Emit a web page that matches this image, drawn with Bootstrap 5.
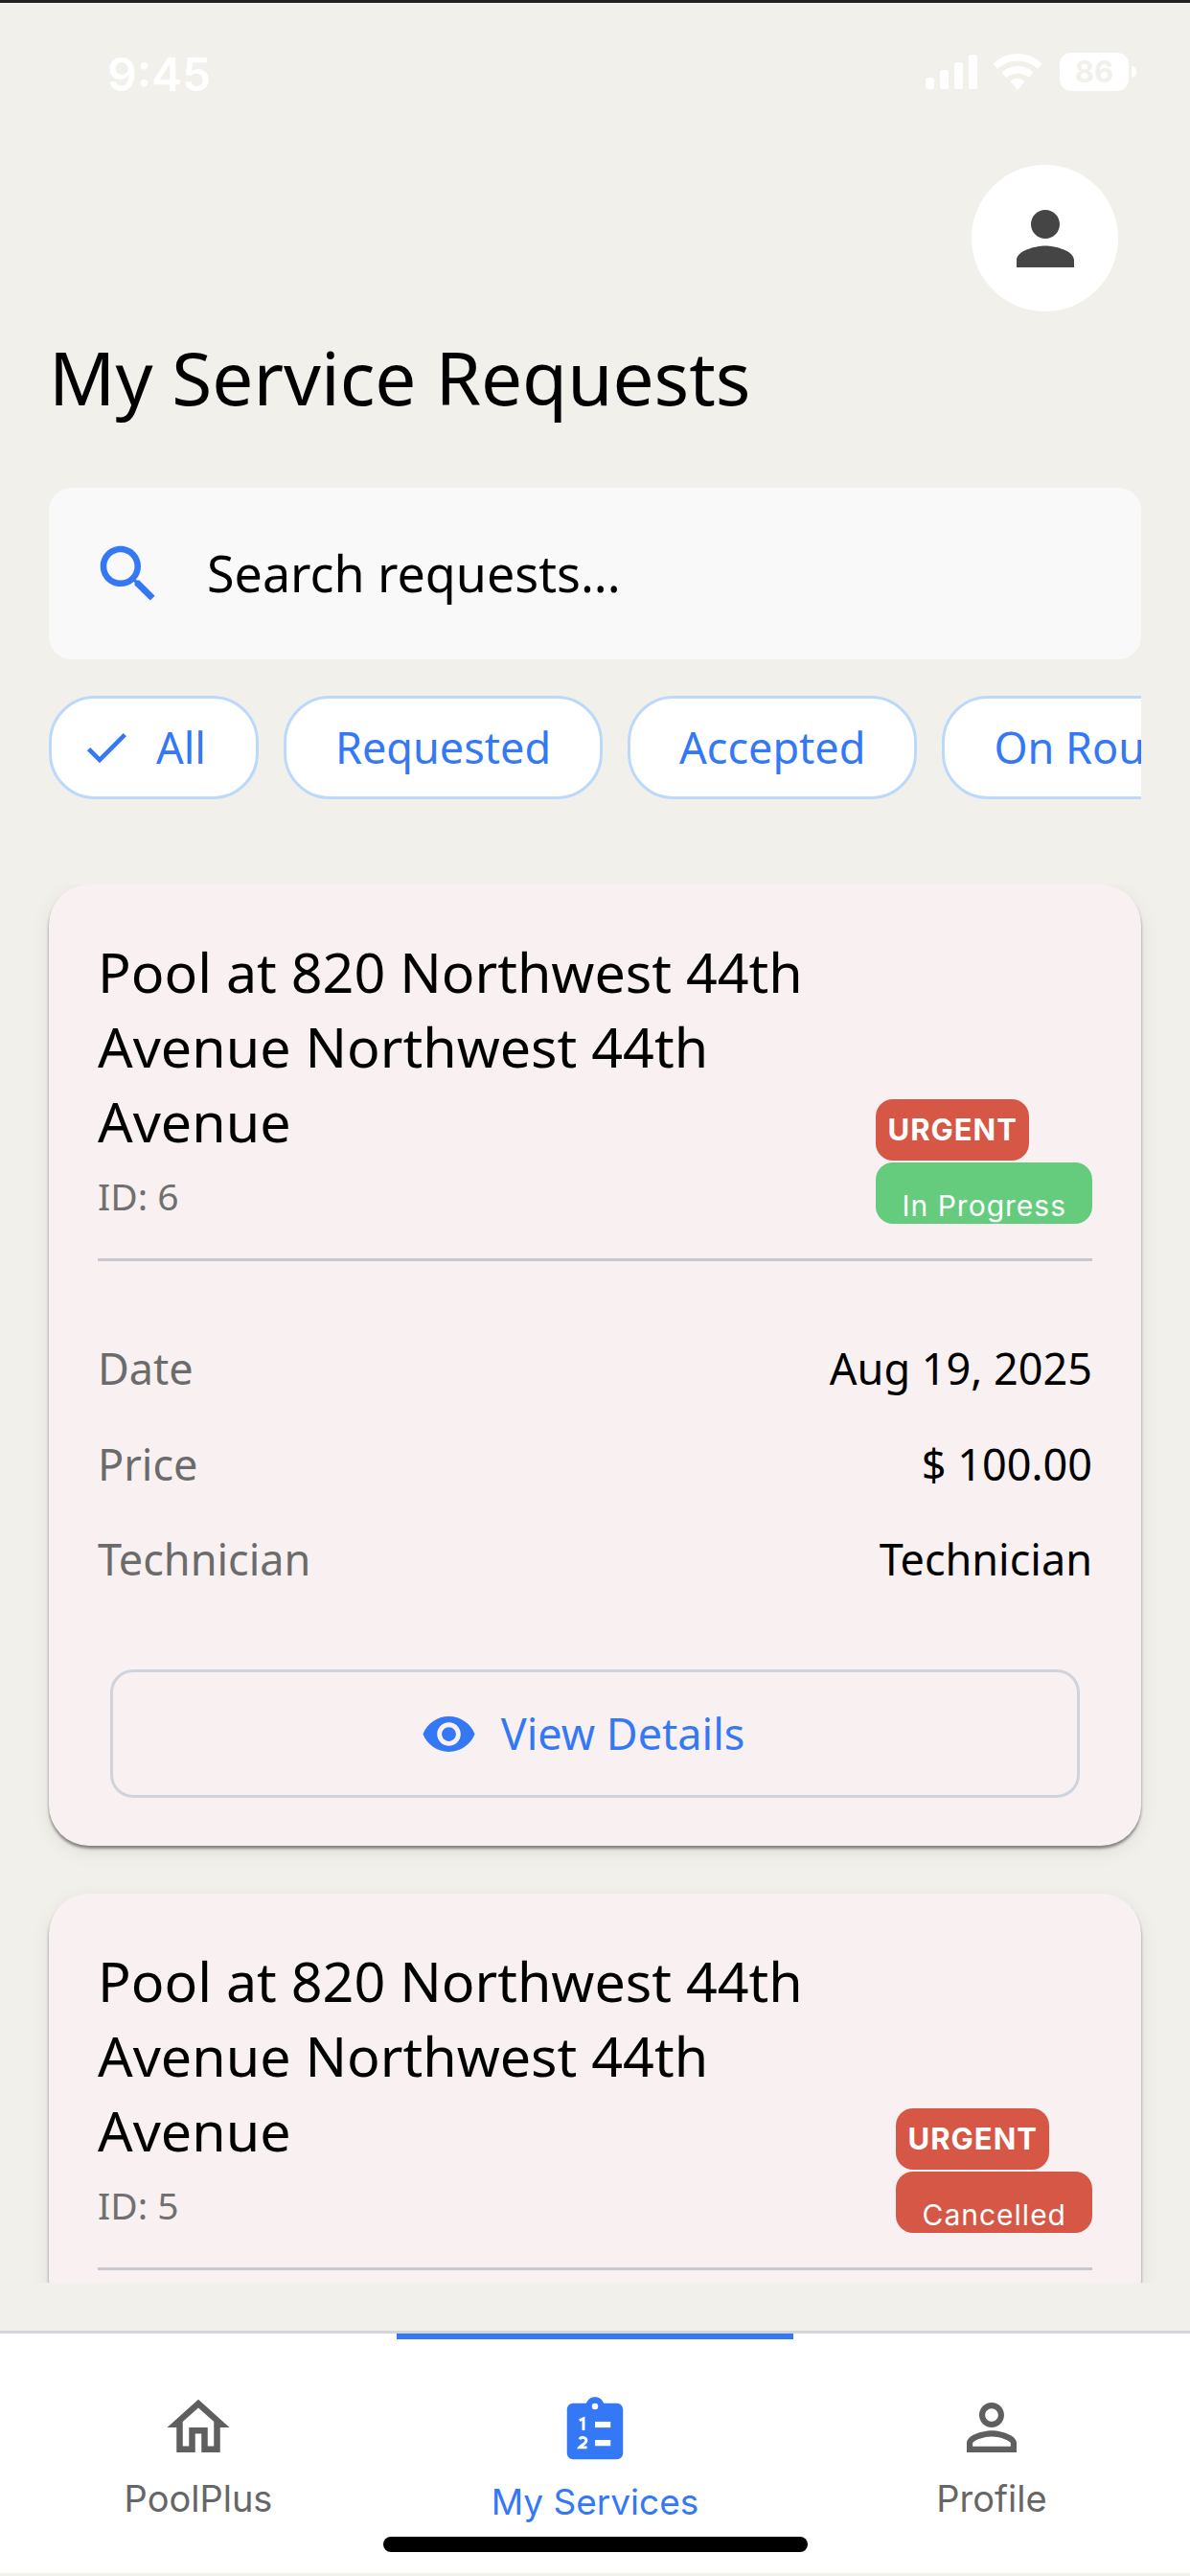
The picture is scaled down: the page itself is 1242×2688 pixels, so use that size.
<!DOCTYPE html>
<html lang="en">

<head>
    <meta charset="UTF-8">
    <meta name="viewport" content="width=device-width, initial-scale=1.0">
    <title>My Service Requests</title>
    <link href="https://cdn.jsdelivr.net/npm/bootstrap@5.3.0/dist/css/bootstrap.min.css" rel="stylesheet">
    <script defer src="https://cdn.jsdelivr.net/npm/bootstrap@5.3.0/dist/js/bootstrap.bundle.min.js"></script>
    <style>
        body {
            background-color: #f1f0eb;
            font-family: "Noto Sans", sans-serif;
            color: #000;
        }

        .screen {
            width: 1242px;
            height: 2688px;
            border-top: 3px solid #222;
            overflow: hidden;
        }

        /* Status bar */
        .status-bar {
            height: 169px;
            padding: 52px 56px 0 112px;
            color: #fff;
            font-family: Inter, sans-serif;
        }

        .status-time {
            font-size: 48px;
            font-weight: 600;
            line-height: 46px;
        }

        .status-batt {
            width: 72px;
            height: 40px;
            margin-left: 18px;
            background: #fff;
            border-radius: 12px;
            color: #f1f0eb;
            font-size: 31px;
            font-weight: 700;
            line-height: 40px;
            text-align: center;
        }

        .status-nub {
            width: 5px;
            height: 12px;
            margin-left: 3px;
            background: #fff;
            border-radius: 0 5px 5px 0;
        }

        /* Header */
        .avatar-row {
            padding-right: 75px;
        }

        .avatar-btn {
            width: 153px;
            height: 153px;
            background: #fff;
        }

        .page-title {
            font-size: 76.5px;
            line-height: 98px;
            font-weight: 400;
            margin: 19px 0 67px 51px;
        }

        /* Search and chips */
        .search-box {
            height: 179px;
            margin: 0 51px 38px;
            padding-left: 44px;
            background: #f9f9f9;
            border-radius: 24px;
        }

        .search-box .form-control {
            background: transparent;
            border: 0;
            box-shadow: none;
            font-size: 52px;
            padding: 0 0 2px 43px;
            color: #000;
        }

        .search-box .form-control::placeholder {
            color: #000;
            opacity: 1;
        }

        .chip-row {
            margin: 0 51px 89px;
            gap: 26px;
            overflow: hidden;
        }

        .chip-btn {
            flex: none;
            height: 108px;
            padding: 0 51px;
            background: #fff;
            border: 3px solid #bcd8fb;
            border-radius: 48px;
            color: #3478f6;
            font-size: 45px;
        }

        .chip-all {
            padding: 0 52px 0 29px;
            gap: 24px;
        }

        /* Request cards */
        .req-list {
            height: 1459px;
            padding: 0 51px;
            margin-bottom: 50px;
            overflow: hidden;
            gap: 50px;
        }

        .req-card {
            flex: none;
            padding: 52px 51px 50px;
            background: #f9f1f1;
            border: 0;
            border-radius: 42px;
            box-shadow: 0 3px 3px rgba(0, 0, 0, .42), 0 6px 20px rgba(0, 0, 0, .08);
        }

        .req-head {
            padding-bottom: 36px;
            border-bottom: 3px solid #c9c7cd;
        }

        .req-name {
            width: 800px;
            font-size: 57.4px;
            line-height: 78px;
            font-weight: 400;
            margin: 0 0 14px;
        }

        .req-id {
            font-size: 39px;
            line-height: 50px;
            color: #707070;
            margin-bottom: 4px;
        }

        .tag-box {
            font-family: Inter, sans-serif;
            color: #fff;
            height: 64px;
            border-radius: 18px;
        }

        .tag-urgent {
            padding: 0 12px;
            margin-bottom: 2px;
            background: #d65745;
            font-size: 31px;
            font-weight: 700;
            letter-spacing: 1px;
            line-height: 64px;
        }

        .tag-status {
            padding: 0 27px;
            font-size: 30px;
            letter-spacing: 1px;
            line-height: 90px;
            overflow: hidden;
        }

        .tag-green {
            background: #65cb7d;
        }

        .tag-red {
            background: #d65745;
        }

        .req-rows {
            padding: 81px 0 84px;
            gap: 37.5px;
            font-size: 45px;
            line-height: 62px;
        }

        .row-label {
            color: #6b6b6b;
        }

        .view-btn {
            height: 134px;
            margin: 0 13px;
            padding-right: 38px;
            gap: 25px;
            background: transparent;
            border: 3px solid #d0d3dc;
            border-radius: 24px;
            color: #3478f6;
            font-size: 45px;
        }

        /* Bottom navigation */
        .bottom-bar {
            height: 253px;
            background: #fff;
            border-top: 3px solid #d3d5db;
        }

        .bar-item {
            width: 414px;
            padding-top: 59px;
            font-family: Inter, sans-serif;
            font-size: 38px;
            line-height: 44px;
            color: #666;
        }

        .bar-item svg {
            margin-bottom: 13px;
        }

        .bar-item.active {
            padding-top: 57px;
            border-top: 6px solid #3478f6;
            color: #3478f6;
            font-size: 37px;
        }

        .home-pill {
            left: 400px;
            top: 2644px;
            width: 443px;
            height: 16px;
            background: #000;
            border-radius: 8px;
        }
    </style>
</head>

<body>
    <div class="screen d-flex flex-column position-relative">
        <!-- Status bar -->
        <div class="status-bar d-flex justify-content-between align-items-start flex-shrink-0">
            <div class="status-time">9:45</div>
            <div class="d-flex align-items-center">
                <svg width="54" height="36" viewBox="0 0 54 36" fill="#fff">
                    <rect x="0" y="24" width="9" height="12" rx="2.5"/>
                    <rect x="15" y="16" width="9" height="20" rx="2.5"/>
                    <rect x="30" y="8" width="9" height="28" rx="2.5"/>
                    <rect x="45" y="0" width="9" height="36" rx="2.5"/>
                </svg>
                <svg class="ms-3" width="52" height="38" viewBox="0 0 52 38" fill="#fff">
                    <path d="M26 0c10 0 18.500 4 25.500 10.500L47 16C41 10.500 34 7.500 26 7.500S11 10.500 5 16L.5 10.500C7.500 4 16 0 26 0z"/>
                    <path d="M26 13c6.500 0 12 2.500 16.500 6.500L38 25c-3.500-3-7.500-4.500-12-4.500S17.500 22 14 25l-4.500-5.500C14 15.500 19.500 13 26 13z"/>
                    <path d="M26 26c3 0 5.500 1 7.500 3L26 38l-7.500-9c2-2 4.500-3 7.500-3z"/>
                </svg>
                <div class="status-batt">86</div>
                <div class="status-nub"></div>
            </div>
        </div>

        <!-- Header -->
        <div class="avatar-row d-flex justify-content-end flex-shrink-0">
            <button class="avatar-btn btn rounded-circle p-0 border-0 d-flex align-items-center justify-content-center">
                <svg width="90" height="90" viewBox="0 0 24 24" fill="#454545">
                    <path d="M12 12c2.210 0 4-1.790 4-4s-1.790-4-4-4-4 1.790-4 4 1.790 4 4 4zm0 2c-2.670 0-8 1.340-8 4v2h16v-2c0-2.660-5.330-4-8-4z"/>
                </svg>
            </button>
        </div>
        <h1 class="page-title">My Service Requests</h1>

        <!-- Search -->
        <div class="search-box d-flex align-items-center flex-shrink-0">
            <svg class="flex-shrink-0" width="78" height="78" viewBox="0 0 24 24" fill="#3478f6">
                <path d="M15.500 14h-.790l-.280-.270C15.410 12.590 16 11.110 16 9.500 16 5.910 13.090 3 9.500 3S3 5.910 3 9.500 5.910 16 9.500 16c1.610 0 3.090-.590 4.230-1.570l.270.280v.790l5 4.990L20.490 19l-4.990-5zm-6 0C7.010 14 5 11.990 5 9.500S7.010 5 9.500 5 14 7.010 14 9.500 11.990 14 9.500 14z"/>
            </svg>
            <input type="text" class="form-control" placeholder="Search requests...">
        </div>

        <!-- Filter chips -->
        <div class="chip-row d-flex flex-shrink-0">
            <button class="chip-btn chip-all btn d-flex align-items-center">
                <svg class="flex-shrink-0" width="56" height="56" viewBox="0 0 24 24" fill="#3478f6">
                    <path d="M9 16.170L4.830 12l-1.420 1.410L9 19 21 7l-1.410-1.410z"/>
                </svg>
                All
            </button>
            <button class="chip-btn btn">Requested</button>
            <button class="chip-btn btn">Accepted</button>
            <button class="chip-btn btn">On Route</button>
        </div>

        <!-- Requests -->
        <div class="req-list d-flex flex-column flex-shrink-0">
            <div class="req-card card">
                <div class="req-head d-flex justify-content-between align-items-end">
                    <div>
                        <h2 class="req-name">Pool at 820 Northwest 44th Avenue Northwest 44th Avenue</h2>
                        <div class="req-id">ID: 6</div>
                    </div>
                    <div class="d-flex flex-column align-items-start">
                        <div class="tag-box tag-urgent">URGENT</div>
                        <div class="tag-box tag-status tag-green">In Progress</div>
                    </div>
                </div>
                <div class="req-rows d-flex flex-column">
                    <div class="d-flex justify-content-between"><span class="row-label">Date</span><span>Aug 19, 2025</span></div>
                    <div class="d-flex justify-content-between"><span class="row-label">Price</span><span>$ 100.00</span></div>
                    <div class="d-flex justify-content-between"><span class="row-label">Technician</span><span>Technician</span></div>
                </div>
                <button class="view-btn btn d-flex align-items-center justify-content-center">
                    <svg width="59" height="59" viewBox="0 0 24 24" fill="#3478f6">
                        <path d="M12 4.500C7 4.500 2.730 7.610 1 12c1.730 4.390 6 7.500 11 7.500s9.270-3.110 11-7.500c-1.730-4.390-6-7.500-11-7.500zM12 17c-2.760 0-5-2.240-5-5s2.240-5 5-5 5 2.240 5 5-2.240 5-5 5zm0-8c-1.660 0-3 1.340-3 3s1.340 3 3 3 3-1.340 3-3-1.340-3-3-3z"/>
                    </svg>
                    View Details
                </button>
            </div>

            <div class="req-card card">
                <div class="req-head d-flex justify-content-between align-items-end">
                    <div>
                        <h2 class="req-name">Pool at 820 Northwest 44th Avenue Northwest 44th Avenue</h2>
                        <div class="req-id">ID: 5</div>
                    </div>
                    <div class="d-flex flex-column align-items-start">
                        <div class="tag-box tag-urgent">URGENT</div>
                        <div class="tag-box tag-status tag-red">Cancelled</div>
                    </div>
                </div>
            </div>
        </div>

        <!-- Bottom navigation -->
        <nav class="bottom-bar d-flex flex-shrink-0">
            <div class="bar-item d-flex flex-column align-items-center">
                <svg width="78" height="78" viewBox="0 0 24 24" fill="#5f5f5f">
                    <path d="M12 5.690l5 4.500V18h-2v-6H9v6H7v-7.810l5-4.500M12 3L2 12h3v8h6v-6h2v6h6v-8h3L12 3z"/>
                </svg>
                PoolPlus
            </div>
            <div class="bar-item active d-flex flex-column align-items-center">
                <svg width="78" height="78" viewBox="0 0 24 24">
                    <path fill="#3478f6" d="M19 3h-4.180C14.400 1.840 13.300 1 12 1c-1.300 0-2.400.840-2.820 2H5c-1.100 0-2 .900-2 2v14c0 1.100.900 2 2 2h14c1.100 0 2-.900 2-2V5c0-1.100-.900-2-2-2z"/>
                    <circle cx="12" cy="4" r="1" fill="#fff"/>
                    <rect x="12" y="8.900" width="5" height="1.900" fill="#fff"/>
                    <rect x="12" y="14.800" width="5" height="1.900" fill="#fff"/>
                    <path d="M7 8.500l1.300-.6v3.800M7 14.500c.6-.8 2.200-.6 2.200.4 0 1-1.600 1.500-2.200 2.300h2.400" fill="none" stroke="#fff" stroke-width=".9"/>
                </svg>
                My Services
            </div>
            <div class="bar-item d-flex flex-column align-items-center">
                <svg width="78" height="78" viewBox="0 0 24 24" fill="#5f5f5f">
                    <path d="M12 5.900c1.160 0 2.100.940 2.100 2.100s-.940 2.100-2.100 2.100S9.900 9.160 9.900 8s.940-2.100 2.100-2.100m0 9c2.970 0 6.100 1.460 6.100 2.100v1.100H5.900V17c0-.640 3.130-2.100 6.100-2.100M12 4C9.790 4 8 5.790 8 8s1.790 4 4 4 4-1.790 4-4-1.790-4-4-4zm0 9c-2.670 0-8 1.340-8 4v3h16v-3c0-2.660-5.330-4-8-4z"/>
                </svg>
                Profile
            </div>
        </nav>

        <!-- Home indicator lies over the nav bar -->
        <div class="home-pill position-absolute"></div>
    </div>
</body>

</html>
